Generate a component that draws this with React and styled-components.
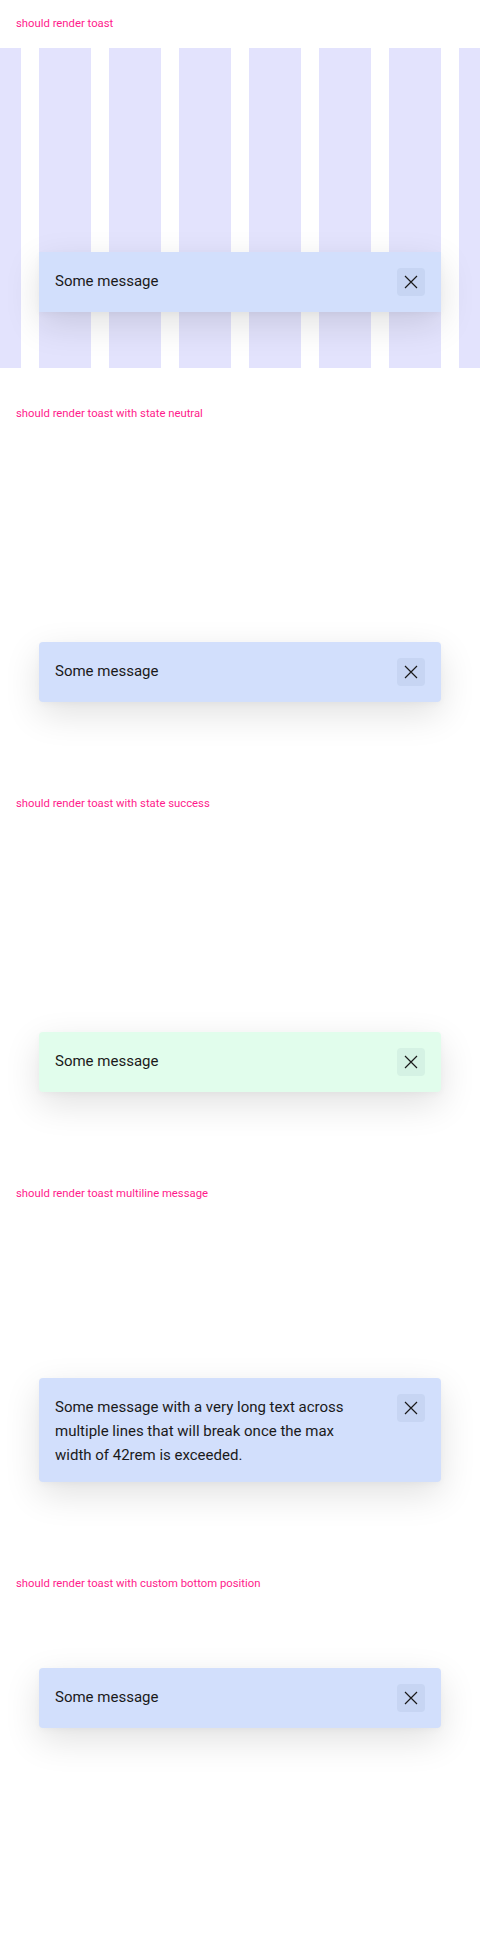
import React from "react";
import styled, { createGlobalStyle } from "styled-components";

const Global = createGlobalStyle`
  html, body { margin: 0; padding: 0; background: #ffffff; }
  body { font-family: Roboto, "Liberation Sans", sans-serif; color: #1a1a1a; }
  * { box-sizing: border-box; }
`;

const Page = styled.div`
  display: flex;
  flex-direction: column;
`;

const Section = styled.section`
  display: flex;
  flex-direction: column;
  gap: 16px;
  padding: 16px 0 22px;
`;

const Heading = styled.h2`
  margin: 0 16px;
  font-family: Roboto, "Liberation Sans", sans-serif;
  font-weight: 400;
  font-size: 11.3px;
  line-height: 16px;
  color: #ff1a8c;
`;

const Stage = styled.div`
  position: relative;
  height: 320px;
  display: grid;
  grid-template-columns: 21px repeat(6, 52px) 21px;
  column-gap: 18px;
`;

const Column = styled.div`
  background: #e3e3fd;
`;

const Toast = styled.div`
  position: absolute;
  left: 39px;
  right: 39px;
  bottom: ${(p) => p.$bottom}px;
  display: flex;
  align-items: flex-start;
  gap: 32px;
  padding: 16px;
  border-radius: ${(p) => (p.$square ? 0 : 4)}px;
  background: ${(p) => (p.$state === "success" ? "#e1fdec" : "#d2dffc")};
  box-shadow: 0 12px 36px rgba(0, 0, 0, 0.12), 0 2px 6px rgba(0, 0, 0, 0.03);
`;

const Message = styled.p`
  flex: 1;
  margin: 0 0 -1px;
  padding-top: 1px;
  font-family: Roboto, "Liberation Sans", sans-serif;
  font-size: 15px;
  line-height: 24px;
  color: #1a1a1a;
`;

const CloseButton = styled.button`
  flex: none;
  width: 28px;
  height: 28px;
  padding: 0;
  border: 0;
  border-radius: 4px;
  background: rgba(40, 60, 100, 0.06);
  display: flex;
  align-items: center;
  justify-content: center;
  color: #1a1a1a;
  cursor: pointer;
`;

const CloseIcon = () => (
  <svg width="14" height="14" viewBox="0 0 14 14" fill="none">
    <path d="M1 1L13 13M13 1L1 13" stroke="currentColor" strokeWidth="1.2" />
  </svg>
);

const ToastBox = ({ state, bottom = 56, square, children }) => (
  <Toast $state={state} $bottom={bottom} $square={square}>
    <Message>{children}</Message>
    <CloseButton aria-label="Close">
      <CloseIcon />
    </CloseButton>
  </Toast>
);

const cases = [
  { title: "should render toast", grid: true, square: true, msg: "Some message" },
  { title: "should render toast with state neutral", msg: "Some message" },
  { title: "should render toast with state success", state: "success", msg: "Some message" },
  {
    title: "should render toast multiline message",
    msg: "Some message with a very long text across multiple lines that will break once the max width of 42rem is exceeded.",
  },
  { title: "should render toast with custom bottom position", bottom: 200, msg: "Some message" },
];

export default function App() {
  return (
    <Page>
      <Global />
      {cases.map((c) => (
        <Section key={c.title}>
          <Heading>{c.title}</Heading>
          <Stage>
            {c.grid && Array.from({ length: 8 }).map((_, i) => <Column key={i} />)}
            <ToastBox state={c.state} bottom={c.bottom} square={c.square}>
              {c.msg}
            </ToastBox>
          </Stage>
        </Section>
      ))}
    </Page>
  );
}
